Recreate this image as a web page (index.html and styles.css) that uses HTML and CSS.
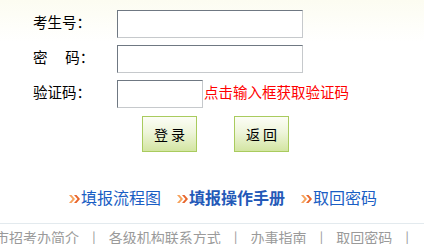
FILE: index.html
```html
<!DOCTYPE html>
<html lang="zh-CN">
<head>
<meta charset="utf-8">
<title>登录</title>
<link rel="stylesheet" href="styles.css">
</head>
<body>
<div class="page">
  <div class="form">
    <label class="lbl">考生号：</label>
    <div class="field"><input class="inp" type="text"></div>
    <label class="lbl">密　 码：</label>
    <div class="field"><input class="inp" type="password"></div>
    <label class="lbl">验证码：</label>
    <div class="field"><input class="inp short" type="text"><span class="hint">点击输入框获取验证码</span></div>
  </div>
  <div class="buttons">
    <button class="btn">登 录</button>
    <button class="btn">返 回</button>
  </div>
  <div class="links">
    <a class="link"><svg class="arr" width="11" height="8" viewBox="0 0 11 8"><path d="M0 0h2.5l3.5 4-3.5 4H0l3.5-4z" fill="#f7a25a"/><path d="M5 0h2.5l3.5 4-3.5 4H5l3.5-4z" fill="#e8642a"/></svg>填报流程图</a>
    <a class="link bold"><svg class="arr" width="11" height="8" viewBox="0 0 11 8"><path d="M0 0h2.5l3.5 4-3.5 4H0l3.5-4z" fill="#f7a25a"/><path d="M5 0h2.5l3.5 4-3.5 4H5l3.5-4z" fill="#e8642a"/></svg>填报操作手册</a>
    <a class="link"><svg class="arr" width="11" height="8" viewBox="0 0 11 8"><path d="M0 0h2.5l3.5 4-3.5 4H0l3.5-4z" fill="#f7a25a"/><path d="M5 0h2.5l3.5 4-3.5 4H5l3.5-4z" fill="#e8642a"/></svg>取回密码</a>
  </div>
  <div class="footer">
    <div class="footer-inner">
      <span>市招考办简介</span><span class="sep">|</span><span>各级机构联系方式</span><span class="sep">|</span><span>办事指南</span><span class="sep">|</span><span>取回密码</span><span class="sep">|</span>
    </div>
  </div>
</div>
</body>
</html>
```

FILE: styles.css
```css
html, body {
  margin: 0;
  padding: 0;
}
body {
  width: 424px;
  height: 244px;
  overflow: hidden;
  background: linear-gradient(to bottom, #fcfcf1 0px, #ffffff 42px);
  font-family: "Noto Sans CJK SC", "Noto Sans", sans-serif;
  font-size: 14px;
  color: #000;
}
.page {
  display: flex;
  flex-direction: column;
}
.form {
  display: grid;
  grid-template-columns: 84px auto;
  grid-auto-rows: 28px;
  row-gap: 7px;
  padding: 10px 0 0 33px;
}
.lbl {
  display: flex;
  align-items: center;
  font-size: 14.5px;
  line-height: 20px;
  padding-bottom: 4px;
  white-space: pre;
}
.field {
  display: flex;
  align-items: center;
}
.inp {
  box-sizing: border-box;
  width: 186px;
  height: 28px;
  margin: 0;
  padding: 0 3px;
  border: 1px solid;
  border-color: #6f7882 #c6c9cc #c6c9cc #6f7882;
  background: #fff;
  outline: none;
}
.inp.short {
  width: 86px;
}
.hint {
  color: #ff0000;
  font-size: 14.5px;
  margin-left: 1px;
  line-height: 20px;
  padding-bottom: 4px;
}
.buttons {
  display: flex;
  gap: 37px;
  padding-left: 142px;
  margin-top: 8px;
}
.btn {
  box-sizing: border-box;
  width: 55px;
  height: 36px;
  margin: 0;
  padding: 0;
  border: 1px solid #a9cb5e;
  background: linear-gradient(to bottom, #fcfdf6 0%, #eef5da 45%, #d3e5a2 100%);
  font-family: "Noto Sans CJK SC", sans-serif;
  font-size: 14px;
  color: #000;
  line-height: 20px;
}
.links {
  display: flex;
  align-items: center;
  gap: 16px;
  padding-left: 69px;
  margin-top: 35px;
  height: 20px;
}
.link {
  display: flex;
  align-items: center;
  font-size: 16px;
  line-height: 20px;
  color: #1a5ec4;
  text-decoration: none;
}
.link.bold {
  font-weight: bold;
  color: #2459b8;
}
.arr {
  display: block;
  margin-top: 3px;
  margin-right: 1px;
  flex: none;
}
.footer {
  margin-top: 16px;
  border-top: 1px solid #e3eaee;
  padding-top: 3px;
  overflow: hidden;
}
.footer-inner {
  display: flex;
  white-space: nowrap;
  margin-left: -5px;
  color: #9a9a9a;
  font-size: 14px;
  line-height: 20px;
}
.sep {
  margin: 0 13px;
}
```
